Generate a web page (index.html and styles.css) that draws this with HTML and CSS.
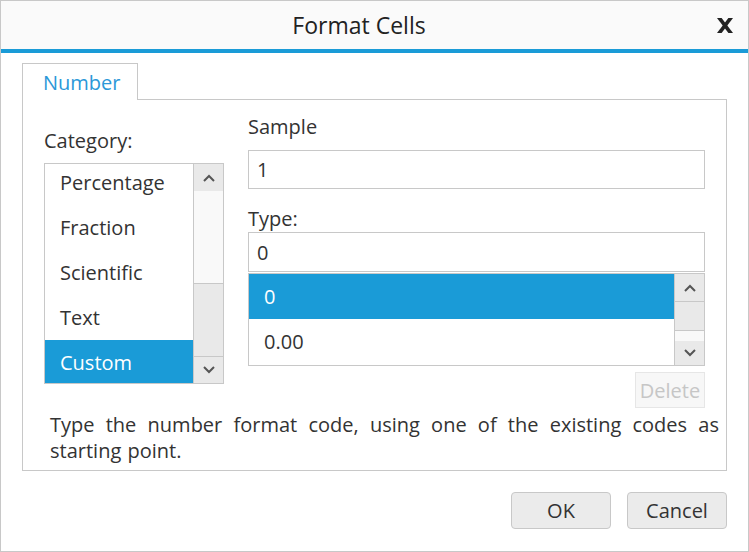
FILE: index.html
```html
<!DOCTYPE html>
<html>
<head>
<meta charset="utf-8">
<link rel="stylesheet" href="styles.css">
</head>
<body>
<div class="window">
  <div class="titlebar">
    <div class="title">Format Cells</div>
    <svg class="close" width="16" height="15" viewBox="0 0 16 15"><polygon points="0,0 4.6,0 16,15 11.4,15" fill="#222"/><polygon points="11.4,0 16,0 4.6,15 0,15" fill="#222"/></svg>
  </div>
  <div class="body">
    <div class="tabs"><div class="tab">Number</div></div>
    <div class="panel">
      <div class="cols">
        <div class="left">
          <div class="label">Category:</div>
          <div class="listbox cat-list">
            <div class="items">
              <div class="items-inner">
                <div class="item">Percentage</div>
                <div class="item">Fraction</div>
                <div class="item">Scientific</div>
                <div class="item">Text</div>
                <div class="item selected">Custom</div>
              </div>
            </div>
            <div class="scrollbar">
              <div class="sb-btn cat-up"><svg width="12" height="8" viewBox="0 0 12 8"><polyline points="1,7 6,2 11,7" fill="none" stroke="#555" stroke-width="2"/></svg></div>
              <div class="sb-track cat-track"></div>
              <div class="sb-thumb cat-thumb"></div>
              <div class="sb-btn cat-down"><svg width="12" height="8" viewBox="0 0 12 8"><polyline points="1,1 6,6 11,1" fill="none" stroke="#555" stroke-width="2"/></svg></div>
            </div>
          </div>
        </div>
        <div class="right">
          <div class="label">Sample</div>
          <div class="field">1</div>
          <div class="label type-label">Type:</div>
          <div class="field type-field">0</div>
          <div class="listbox type-list">
            <div class="items">
              <div class="item selected">0</div>
              <div class="item">0.00</div>
            </div>
            <div class="scrollbar">
              <div class="sb-btn type-up"><svg width="12" height="8" viewBox="0 0 12 8"><polyline points="1,7 6,2 11,7" fill="none" stroke="#555" stroke-width="2"/></svg></div>
              <div class="sb-thumb type-thumb"></div>
              <div class="sb-track type-track"></div>
              <div class="sb-btn type-down"><svg width="12" height="8" viewBox="0 0 12 8"><polyline points="1,1 6,6 11,1" fill="none" stroke="#555" stroke-width="2"/></svg></div>
            </div>
          </div>
          <div class="delete-row"><button class="btn-delete">Delete</button></div>
        </div>
      </div>
      <p class="desc">Type the number format code, using one of the existing codes as starting point.</p>
    </div>
    <div class="footer">
      <button class="btn">OK</button>
      <button class="btn">Cancel</button>
    </div>
  </div>
</div>
</body>
</html>
```

FILE: styles.css
```css
body {
  margin: 0;
  font-family: "Open Sans", "Noto Sans", sans-serif;
  font-size: 20px;
  color: #333;
  background: #fff;
}
.window {
  width: 749px;
  height: 552px;
  box-sizing: border-box;
  border: 1px solid #c8c8c8;
  background: #fff;
  display: flex;
  flex-direction: column;
}
.titlebar {
  height: 48px;
  flex: none;
  background: #fafafa;
  border-bottom: 4px solid #1a9bd7;
  display: flex;
  align-items: center;
}
.title {
  flex: 1;
  text-align: center;
  font-size: 23px;
  color: #222;
}
.close {
  margin-right: 15px;
  flex: none;
}
.body {
  padding: 10px 21px 0 21px;
}
.tabs {
  display: flex;
}
.tab {
  width: 116px;
  height: 37px;
  box-sizing: border-box;
  border: 1px solid #c8c8c8;
  border-bottom: none;
  padding: 6px 0 0 20px;
  line-height: 26px;
  color: #2b98d8;
  background: #fff;
  position: relative;
  z-index: 1;
  margin-bottom: -1px;
}
.panel {
  border: 1px solid #c8c8c8;
  padding: 14px 0 6px;
}
.cols {
  display: flex;
  gap: 24px;
  padding: 0 21px;
}
.left {
  width: 180px;
  flex: none;
  padding-top: 14px;
}
.right {
  flex: 1;
}
.label {
  line-height: 26px;
}
.listbox {
  display: flex;
  border: 1px solid #c8c8c8;
  box-sizing: border-box;
  overflow: hidden;
}
.cat-list {
  margin-top: 9px;
  height: 221px;
}
.items {
  flex: 1;
  overflow: hidden;
}
.items-inner {
  margin-top: -4px;
}
.item {
  height: 45px;
  line-height: 46px;
  padding-left: 15px;
  white-space: nowrap;
}
.item.selected {
  background: #1a9bd7;
  color: #fff;
}
.scrollbar {
  width: 29px;
  flex: none;
  border-left: 1px solid #c8c8c8;
  display: flex;
  flex-direction: column;
}
.sb-btn {
  background: #e9e9e9;
  display: flex;
  align-items: center;
  justify-content: center;
}
.sb-track {
  background: #f9f9f9;
}
.sb-thumb {
  background: #e9e9e9;
  border-top: 1px solid #c8c8c8;
  border-bottom: 1px solid #c8c8c8;
}
.cat-up { height: 27px; }
.cat-track { height: 92px; }
.cat-thumb { height: 72px; }
.cat-down { height: 26px; }
.type-up { height: 27px; }
.type-thumb { height: 28px; }
.type-track { height: 10px; }
.type-down { height: 24px; }

.field {
  height: 39px;
  box-sizing: border-box;
  border: 1px solid #c8c8c8;
  display: flex;
  align-items: center;
  padding-left: 8px;
  margin-top: 10px;
}
.type-label {
  margin-top: 17px;
}
.type-field {
  height: 40px;
  margin-top: 0;
}
.type-list {
  margin-top: 1px;
  height: 93px;
}
.delete-row {
  display: flex;
  justify-content: flex-end;
  margin-top: 6px;
}
.btn-delete {
  width: 70px;
  height: 36px;
  box-sizing: border-box;
  border: 1px solid #e6e6e6;
  background: #f7f7f7;
  color: #c6c6c6;
  font: inherit;
  padding: 0;
}
.desc {
  margin: 4px 0 0;
  padding: 0 7px 0 27px;
  text-align: justify;
  line-height: 26px;
  word-spacing: 1px;
}
.footer {
  display: flex;
  justify-content: flex-end;
  gap: 16px;
  margin-top: 21px;
}
.btn {
  width: 100px;
  height: 37px;
  box-sizing: border-box;
  border: 1px solid #c8c8c8;
  border-radius: 4px;
  background: #ebebeb;
  font: inherit;
  color: #333;
  padding: 0;
}
```
